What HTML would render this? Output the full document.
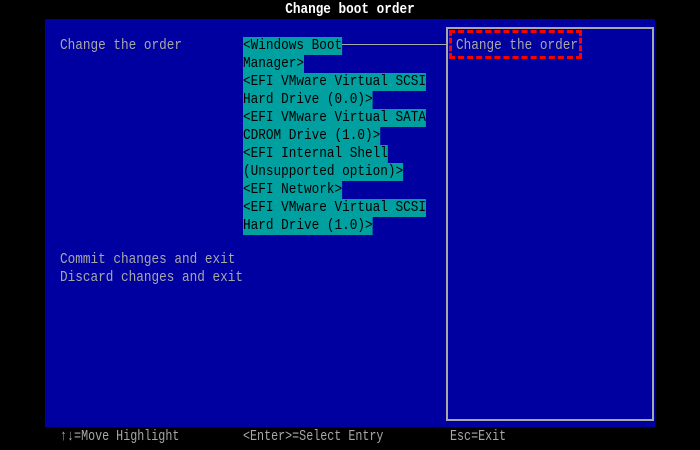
<!DOCTYPE html>
<html><head><meta charset="utf-8"><style>
html,body{margin:0;padding:0;}
body{width:700px;height:450px;background:#000;position:relative;overflow:hidden;font-family:"Liberation Mono",monospace;font-size:15px;}
.t{position:absolute;white-space:pre;line-height:18px;height:18px;transform:scaleX(0.847);transform-origin:left;}
#panel{position:absolute;left:45px;top:19px;width:610px;height:408px;background:#0000a0;}
#box{position:absolute;left:446px;top:27px;width:204px;height:390px;border:2px solid #a8a8a8;box-sizing:content-box;}
.g{color:#a8a8a8;}
.h{background:#00a0a0;color:#000;}
#title{left:0;width:700px;text-align:center;top:1px;color:#fff;font-weight:bold;transform-origin:center;}
#line{position:absolute;left:342px;top:44px;width:104px;height:1px;background:#a8a8a8;}
#red{position:absolute;left:449px;top:30px;width:127px;height:23px;border:3px dashed #ff0000;}
.b{color:#a8a8a8;top:428px;transform:scaleX(0.78);}
</style></head><body>
<div class="t" id="title">Change boot order</div>
<div id="panel"></div>
<div id="box"></div>
<div id="line"></div>
<div class="t g" style="left:60px;top:37px">Change the order</div>
<div class="t h" style="left:243px;top:37px">&lt;Windows Boot</div>
<div class="t h" style="left:243px;top:55px">Manager&gt;</div>
<div class="t h" style="left:243px;top:73px">&lt;EFI VMware Virtual SCSI</div>
<div class="t h" style="left:243px;top:91px">Hard Drive (0.0)&gt;</div>
<div class="t h" style="left:243px;top:109px">&lt;EFI VMware Virtual SATA</div>
<div class="t h" style="left:243px;top:127px">CDROM Drive (1.0)&gt;</div>
<div class="t h" style="left:243px;top:145px">&lt;EFI Internal Shell</div>
<div class="t h" style="left:243px;top:163px">(Unsupported option)&gt;</div>
<div class="t h" style="left:243px;top:181px">&lt;EFI Network&gt;</div>
<div class="t h" style="left:243px;top:199px">&lt;EFI VMware Virtual SCSI</div>
<div class="t h" style="left:243px;top:217px">Hard Drive (1.0)&gt;</div>
<div class="t g" style="left:60px;top:251px">Commit changes and exit</div>
<div class="t g" style="left:60px;top:269px">Discard changes and exit</div>
<div id="red"></div>
<div class="t g" style="left:456px;top:37px">Change the order</div>
<div class="t b" style="left:60px">↑↓=Move Highlight</div>
<div class="t b" style="left:243px">&lt;Enter&gt;=Select Entry</div>
<div class="t b" style="left:450px">Esc=Exit</div>
</body></html>
